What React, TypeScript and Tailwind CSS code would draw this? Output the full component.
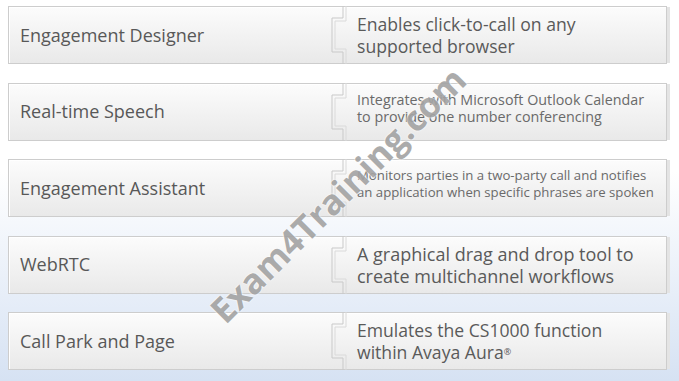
import React from "react";

type RowData = {
  label: string;
  lines: React.ReactNode[];
  size: "lg" | "xl" | "md" | "sm";
};

const rows: RowData[] = [
  {
    label: "Engagement Designer",
    lines: ["Enables click-to-call on any", "supported browser"],
    size: "lg",
  },
  {
    label: "Real-time Speech",
    lines: ["Integrates with Microsoft Outlook Calendar", "to provide one number conferencing"],
    size: "md",
  },
  {
    label: "Engagement Assistant",
    lines: ["Monitors parties in a two-party call and notifies", "an application when specific phrases are spoken"],
    size: "sm",
  },
  {
    label: "WebRTC",
    lines: ["A graphical drag and drop tool to", "create multichannel workflows"],
    size: "xl",
  },
  {
    label: "Call Park and Page",
    lines: [
      "Emulates the CS1000 function",
      <>
        within Avaya Aura<sup className="text-[9px]">®</sup>
      </>,
    ],
    size: "lg",
  },
];

function Bracket() {
  return (
    <svg width="20" height="56" viewBox="0 0 20 56" className="shrink-0 overflow-visible" fill="none">
      <path d="M13 -1 V11 H2 V45 H13 V57" stroke="#c9c9c9" strokeWidth="1" />
      <path d="M16 -1 V14 H5 V42 H16 V57" stroke="#dadada" strokeWidth="1" />
    </svg>
  );
}

function Row({ label, lines, size }: RowData) {
  const textCls =
    size === "lg"
      ? "text-[17.6px] leading-[22px] text-[#5a5a5a]"
      : size === "xl"
        ? "text-[18px] leading-[22px] text-[#5a5a5a]"
        : size === "md"
          ? "pb-[8px] text-[14.3px] leading-[17px] text-[#6a6a6a]"
          : "pb-[8px] text-[13.2px] leading-[17px] text-[#6a6a6a]";
  return (
    <div className="flex h-[58px] w-[659px] border border-[#cdcdcd] bg-gradient-to-b from-[#fcfcfc] to-[#e9e9e9] shadow-[4px_0_0_-1px_#e4e4e4,inset_1px_1px_0_#ffffff]">
      <div className="flex w-[321px] items-center pl-[11px] text-[18px] text-[#585858]">{label}</div>
      <Bracket />
      <div className={`flex flex-col justify-center whitespace-nowrap pl-[7px] ${textCls}`}>
        {lines.map((l, i) => (
          <span key={i}>{l}</span>
        ))}
      </div>
    </div>
  );
}

export default function App() {
  return (
    <div
      className="relative h-[381px] w-[679px] overflow-hidden bg-gradient-to-b from-white via-white via-45% to-[#d6e2f3] pl-[8px] pt-[6px]"
      style={{ fontFamily: '"Open Sans", "Noto Sans", sans-serif' }}
    >
      <div className="flex flex-col gap-[18.5px]">
        {rows.map((r) => (
          <Row key={r.label} {...r} />
        ))}
      </div>
      {/* watermark */}
      <div className="pointer-events-none absolute left-[338px] top-[195px] -translate-x-1/2 -translate-y-1/2 -rotate-45 whitespace-nowrap text-[35px] font-bold text-[#a3a3a3] opacity-90 [text-shadow:0_0_2px_#fff,0_0_2px_#fff]">
        Exam4Training.com
      </div>
    </div>
  );
}
